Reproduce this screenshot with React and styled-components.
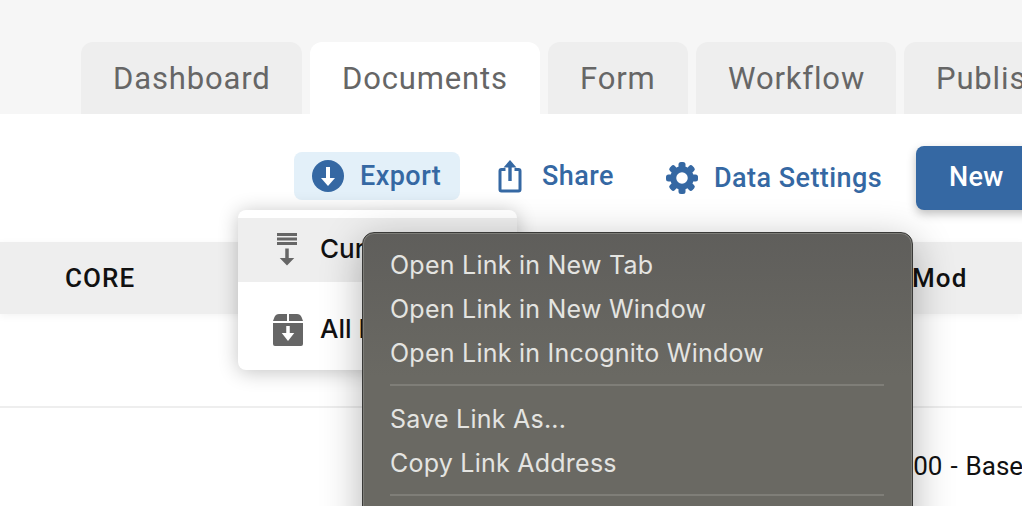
import styled, { createGlobalStyle } from "styled-components";

const GlobalStyle = createGlobalStyle`
  html, body {
    margin: 0;
    padding: 0;
    background: #fff;
    overflow: hidden;
  }
  body {
    font-family: Roboto, "Liberation Sans", sans-serif;
  }
`;

const BLUE = "#3568a3";

const Page = styled.div`
  position: relative;
  width: 1022px;
  height: 506px;
  overflow: hidden;
  background: #fff;
`;

const TabBar = styled.div`
  display: flex;
  align-items: flex-end;
  gap: 8px;
  height: 114px;
  padding-left: 81px;
  background: #f6f6f6;
  box-sizing: border-box;
`;

const Tab = styled.div`
  flex: none;
  box-sizing: border-box;
  height: 72px;
  width: ${(p) => p.$width}px;
  padding: 19px 0 0 32px;
  border-radius: 12px 12px 0 0;
  background: ${(p) => (p.$active ? "#fff" : "#eeeeee")};
  color: #666;
  font-size: 31px;
  line-height: 36px;
  letter-spacing: 0.85px;
  white-space: nowrap;
`;

const Toolbar = styled.div`
  display: flex;
  align-items: flex-start;
  height: 128px;
  box-sizing: border-box;
  padding: 32px 0 0 294px;
  white-space: nowrap;
`;

const ToolButton = styled.div`
  flex: none;
  display: flex;
  align-items: center;
  box-sizing: border-box;
  height: 48px;
  width: ${(p) => p.$width}px;
  margin-right: ${(p) => p.$gap}px;
  margin-top: ${(p) => p.$top || 0}px;
  padding-left: ${(p) => p.$pad}px;
  gap: ${(p) => p.$iconGap}px;
  border-radius: 8px;
  background: ${(p) => (p.$active ? "#e3f0f9" : "transparent")};
  color: ${BLUE};
  font-size: 27px;
  font-weight: 500;
  letter-spacing: 0.45px;
`;

const NewButton = styled.div`
  flex: none;
  box-sizing: border-box;
  width: 130px;
  height: 64px;
  padding: 14px 0 0 33px;
  border-radius: 8px;
  background: ${BLUE};
  color: #fff;
  font-size: 27px;
  line-height: 34px;
  font-weight: 500;
  letter-spacing: 0.3px;
  box-shadow: 0 4px 10px rgba(0, 0, 0, 0.25);
`;

const TableHead = styled.div`
  display: grid;
  grid-template-columns: 912px 1fr;
  align-items: center;
  height: 72px;
  background: #eeeeee;
  color: #111;
  font-size: 26px;
  font-weight: 500;
  letter-spacing: 1.1px;
  box-shadow: 0 2px 8px rgba(0, 0, 0, 0.05);
`;

const CoreLabel = styled.div`
  padding-left: 65px;
`;

const EmptyRow = styled.div`
  height: 92px;
  border-bottom: 2px solid #eeeeee;
`;

const DataRow = styled.div`
  display: grid;
  grid-template-columns: 884px 1fr;
  height: 116px;
  padding-top: 43px;
  box-sizing: border-box;
  color: #111;
  font-size: 26px;
  line-height: 30px;
  word-spacing: 1.5px;
  white-space: nowrap;
`;

const ExportMenu = styled.div`
  position: absolute;
  left: 238px;
  top: 210px;
  width: 279px;
  height: 160px;
  box-sizing: border-box;
  padding-top: 8px;
  border-radius: 8px;
  background: #fff;
  overflow: hidden;
  box-shadow: 0 2px 20px rgba(0, 0, 0, 0.24);
`;

const ExportItem = styled.div`
  display: flex;
  align-items: center;
  height: ${(p) => p.$height}px;
  padding-left: ${(p) => p.$pad}px;
  gap: ${(p) => p.$iconGap}px;
  background: ${(p) => (p.$hover ? "#eeeeee" : "transparent")};
  color: #111;
  font-family: Inter, Roboto, sans-serif;
  font-size: 26px;
  line-height: 30px;
  font-weight: 500;
  white-space: nowrap;
`;

const ItemLabel = styled.span`
  margin-top: -2px;
`;

const ContextMenu = styled.div`
  position: absolute;
  left: 362px;
  top: 232px;
  width: 551px;
  height: 320px;
  box-sizing: border-box;
  padding: 10px 28px 10px 27px;
  border: 1px solid #3a3a38;
  border-radius: 12px;
  background: linear-gradient(#5f5e5b, #6a6963 45%);
  box-shadow: inset 0 0 0 1px #7d7d78, 0 10px 40px rgba(0, 0, 0, 0.3);
  color: #e4e4e1;
  font-family: Inter, Roboto, sans-serif;
  font-size: 25px;
  letter-spacing: 0.24px;
`;

const ContextItem = styled.div`
  height: 44px;
  line-height: 44px;
  white-space: nowrap;
`;

const Separator = styled.div`
  height: 2px;
  margin: 9px 0 11px;
  background: #7f7e78;
`;

const ExportIcon = () => (
  <svg width="32" height="32" viewBox="0 0 32 32">
    <circle cx="16" cy="16" r="16" fill={BLUE} />
    <path d="M14 7h4v11h5l-7 8-7-8h5z" fill="#fff" />
  </svg>
);

const ShareIcon = () => (
  <svg width="26" height="34" viewBox="0 0 26 34" fill="none">
    <path d="M8.500 10.500H4.500a1.500 1.500 0 0 0-1.500 1.500v18.500a1.500 1.500 0 0 0 1.500 1.500h17a1.500 1.500 0 0 0 1.500-1.500V12a1.500 1.500 0 0 0-1.500-1.500h-4" stroke={BLUE} strokeWidth="3" />
    <path d="M13 22V4" stroke={BLUE} strokeWidth="3.400" />
    <path d="M6.500 8.500 13 1l6.500 7.500z" fill={BLUE} />
  </svg>
);

const GearIcon = () => (
  <svg width="32" height="32" viewBox="0 0 32 32">
    <circle cx="16" cy="16" r="8.750" fill="none" stroke={BLUE} strokeWidth="6" />
    {[0, 45, 90, 135, 180, 225, 270, 315].map((deg) => (
      <rect key={deg} x="12.500" y="0" width="7" height="7" rx="2.500" fill={BLUE} transform={`rotate(${deg} 16 16)`} />
    ))}
  </svg>
);

const RowsIcon = () => (
  <svg width="22" height="34" viewBox="0 0 22 34" fill="#666">
    <rect x="0" y="0" width="20" height="3" />
    <rect x="0" y="4.500" width="20" height="3" />
    <rect x="0" y="9" width="20" height="3" />
    <path d="M8.250 15.500h3.500v9.500h5.500L10 32.500 2.750 25h5.500z" />
  </svg>
);

const BoxIcon = () => (
  <svg width="30" height="32" viewBox="0 0 30 32">
    <path d="M6 0h8v7H0l1.500-4A5 5 0 0 1 6 0zM16 0h8a5 5 0 0 1 4.500 3L30 7H16zM0 9h30v21a2 2 0 0 1-2 2H2a2 2 0 0 1-2-2z" fill="#666" />
    <path d="M13.250 12h3.500v7h4.500L15 27l-6.250-8h4.500z" fill="#fff" />
  </svg>
);

const tabs = [
  { label: "Dashboard", width: 221 },
  { label: "Documents", width: 230, active: true },
  { label: "Form", width: 140 },
  { label: "Workflow", width: 200 },
  { label: "Publish", width: 160 },
];

const contextGroups = [
  ["Open Link in New Tab", "Open Link in New Window", "Open Link in Incognito Window"],
  ["Save Link As...", "Copy Link Address"],
];

const App = () => {
  return (
    <Page>
      <GlobalStyle />
      <TabBar>
        {tabs.map((t) => (
          <Tab key={t.label} $width={t.width} $active={t.active}>{t.label}</Tab>
        ))}
      </TabBar>
      <Toolbar>
        <ToolButton $active $width={166} $gap={37} $pad={18} $iconGap={16} $top={6}>
          <ExportIcon />
          Export
        </ToolButton>
        <ToolButton $width={132} $gap={37} $pad={0} $iconGap={19} $top={6}>
          <ShareIcon />
          Share
        </ToolButton>
        <ToolButton $width={250} $gap={0} $pad={0} $iconGap={16} $top={8}>
          <GearIcon />
          Data Settings
        </ToolButton>
        <NewButton>New</NewButton>
      </Toolbar>
      <TableHead>
        <CoreLabel>CORE</CoreLabel>
        <div>Mod</div>
      </TableHead>
      <EmptyRow />
      <DataRow>
        <div />
        <div>1000 - Base</div>
      </DataRow>
      <ExportMenu>
        <ExportItem $hover $height={64} $pad={39} $iconGap={21}>
          <RowsIcon />
          <ItemLabel>Current Page</ItemLabel>
        </ExportItem>
        <ExportItem $height={96} $pad={35} $iconGap={17}>
          <BoxIcon />
          <ItemLabel>All Pages</ItemLabel>
        </ExportItem>
      </ExportMenu>
      <ContextMenu>
        {contextGroups.map((group) => (
          <div key={group[0]}>
            {group.map((item) => (
              <ContextItem key={item}>{item}</ContextItem>
            ))}
            <Separator />
          </div>
        ))}
      </ContextMenu>
    </Page>
  );
};

export default App;
